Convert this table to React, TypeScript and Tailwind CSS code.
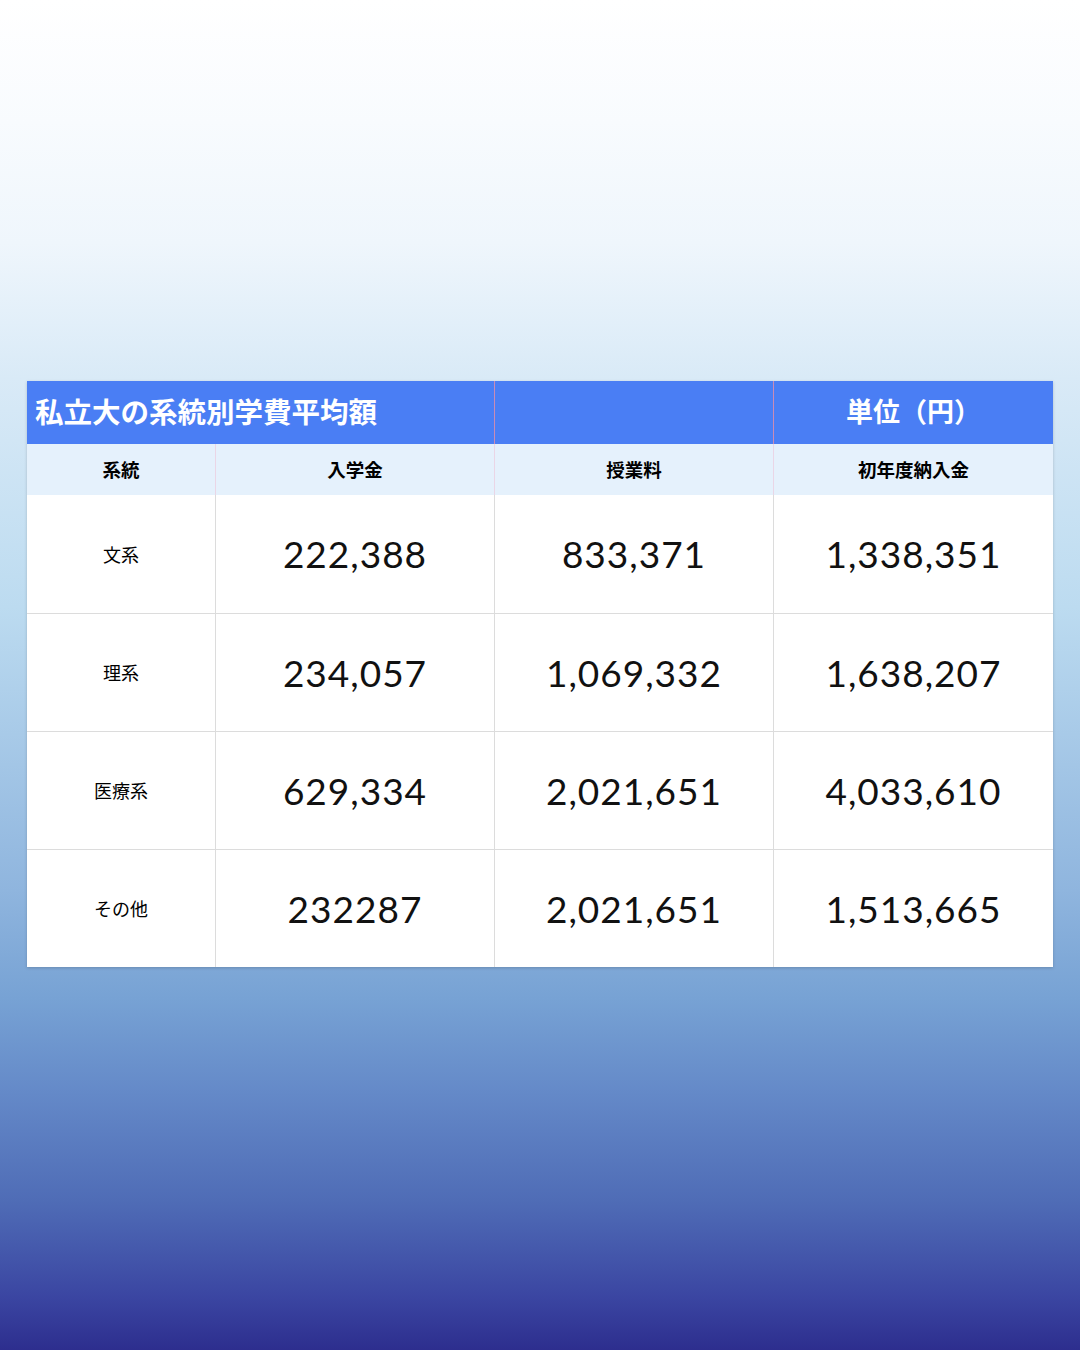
const rows = [
  { name: "文系", a: "222,388", b: "833,371", c: "1,338,351" },
  { name: "理系", a: "234,057", b: "1,069,332", c: "1,638,207" },
  { name: "医療系", a: "629,334", b: "2,021,651", c: "4,033,610" },
  { name: "その他", a: "232287", b: "2,021,651", c: "1,513,665" },
];

const jp = "font-['Noto_Sans_CJK_JP','Noto_Sans',sans-serif]";

export default function App() {
  return (
    <div className="w-[1080px] h-[1350px] bg-[linear-gradient(to_bottom,#ffffff_0%,#f8fbfe_9%,#eff6fc_18%,#d9eaf7_28%,#bcdbf0_45%,#8fb5de_66%,#77a2d4_74%,#6489c8_81%,#4f6cb6_89%,#3b46a2_96%,#2d2e8e_100%)] pt-[381px] px-[27px]">
      <div className={`w-[1026px] bg-white shadow-[0_1px_3px_rgba(0,0,0,0.18)] ${jp}`}>
        {/* title row */}
        <div className="grid grid-cols-[468px_279px_279px] h-[63px] bg-[#4a7ef4] text-white">
          <div className="flex items-center pl-[8px] pb-[2px] text-[28.5px] font-bold border-r border-[#c98bb6]">
            私立大の系統別学費平均額
          </div>
          <div className="border-r border-[#c98bb6]" />
          <div className="flex items-center justify-center pb-[2px] text-[27px] font-bold">単位（円）</div>
        </div>

        {/* header row */}
        <div className="grid grid-cols-[189px_279px_279px_279px] h-[51px] bg-[#e5f1fc] text-[18.5px] font-bold text-black">
          <div className="flex items-center justify-center border-r border-[#ead6e6]">系統</div>
          <div className="flex items-center justify-center border-r border-[#ead6e6]">入学金</div>
          <div className="flex items-center justify-center border-r border-[#ead6e6]">授業料</div>
          <div className="flex items-center justify-center">初年度納入金</div>
        </div>

        {rows.map((r, i) => (
          <div
            key={r.name}
            className={`grid grid-cols-[189px_279px_279px_279px] h-[118px] text-black ${i > 0 ? "border-t border-[#dcdcdc]" : ""}`}
          >
            <div className="flex items-center justify-center text-[18px] border-r border-[#dcdcdc]">{r.name}</div>
            {[r.a, r.b, r.c].map((v, j) => (
              <div
                key={j}
                className={`flex items-center justify-center font-['Lato',sans-serif] text-[37px] font-normal tracking-[1px] text-[#111] ${j < 2 ? "border-r border-[#dcdcdc]" : ""}`}
              >
                {v}
              </div>
            ))}
          </div>
        ))}
      </div>
    </div>
  );
}
